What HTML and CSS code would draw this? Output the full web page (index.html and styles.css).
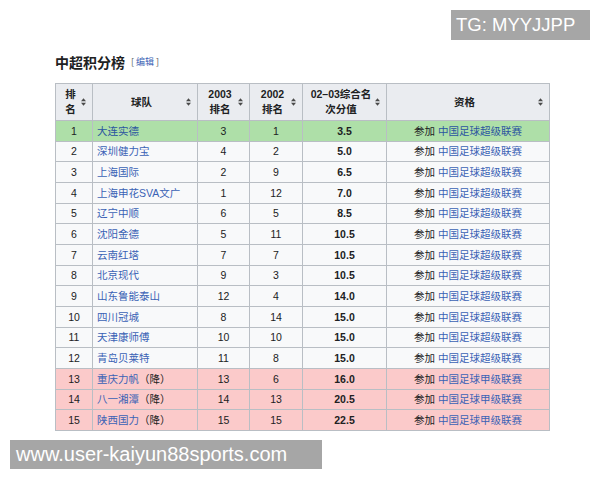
FILE: index.html
```html
<!DOCTYPE html>
<html lang="zh-CN">
<head>
<meta charset="utf-8">
<title>中超积分榜</title>
<link rel="stylesheet" href="styles.css">
</head>
<body>
<div class="page">
  <h2 class="title">中超积分榜<span class="edit">[ <a>编辑</a> ]</span></h2>
  <table class="wt">
    <colgroup>
      <col style="width:37px"><col style="width:105px"><col style="width:52px"><col style="width:53px"><col style="width:84px"><col style="width:163px">
    </colgroup>
    <thead>
      <tr>
        <th><div class="h"><span>排<br>名</span><svg viewBox="0 0 6 9"><path d="M3 0L6 3.6H0Z M3 9L0 5.4H6Z"/></svg></div></th>
        <th><div class="h"><span>球队</span><svg viewBox="0 0 6 9"><path d="M3 0L6 3.6H0Z M3 9L0 5.4H6Z"/></svg></div></th>
        <th><div class="h"><span>2003<br>排名</span><svg viewBox="0 0 6 9"><path d="M3 0L6 3.6H0Z M3 9L0 5.4H6Z"/></svg></div></th>
        <th><div class="h"><span>2002<br>排名</span><svg viewBox="0 0 6 9"><path d="M3 0L6 3.6H0Z M3 9L0 5.4H6Z"/></svg></div></th>
        <th><div class="h"><span>02–03综合名<br>次分值</span><svg viewBox="0 0 6 9"><path d="M3 0L6 3.6H0Z M3 9L0 5.4H6Z"/></svg></div></th>
        <th><div class="h"><span>资格</span><svg viewBox="0 0 6 9"><path d="M3 0L6 3.6H0Z M3 9L0 5.4H6Z"/></svg></div></th>
      </tr>
    </thead>
    <tbody>
      <tr class="up"><td>1</td><td class="team"><a>大连实德</a></td><td>3</td><td>1</td><td class="pts">3.5</td><td>参加 <a>中国足球超级联赛</a></td></tr>
      <tr><td>2</td><td class="team"><a>深圳健力宝</a></td><td>4</td><td>2</td><td class="pts">5.0</td><td>参加 <a>中国足球超级联赛</a></td></tr>
      <tr><td>3</td><td class="team"><a>上海国际</a></td><td>2</td><td>9</td><td class="pts">6.5</td><td>参加 <a>中国足球超级联赛</a></td></tr>
      <tr><td>4</td><td class="team"><a>上海申花SVA文广</a></td><td>1</td><td>12</td><td class="pts">7.0</td><td>参加 <a>中国足球超级联赛</a></td></tr>
      <tr><td>5</td><td class="team"><a>辽宁中顺</a></td><td>6</td><td>5</td><td class="pts">8.5</td><td>参加 <a>中国足球超级联赛</a></td></tr>
      <tr><td>6</td><td class="team"><a>沈阳金德</a></td><td>5</td><td>11</td><td class="pts">10.5</td><td>参加 <a>中国足球超级联赛</a></td></tr>
      <tr><td>7</td><td class="team"><a>云南红塔</a></td><td>7</td><td>7</td><td class="pts">10.5</td><td>参加 <a>中国足球超级联赛</a></td></tr>
      <tr><td>8</td><td class="team"><a>北京现代</a></td><td>9</td><td>3</td><td class="pts">10.5</td><td>参加 <a>中国足球超级联赛</a></td></tr>
      <tr><td>9</td><td class="team"><a>山东鲁能泰山</a></td><td>12</td><td>4</td><td class="pts">14.0</td><td>参加 <a>中国足球超级联赛</a></td></tr>
      <tr><td>10</td><td class="team"><a>四川冠城</a></td><td>8</td><td>14</td><td class="pts">15.0</td><td>参加 <a>中国足球超级联赛</a></td></tr>
      <tr><td>11</td><td class="team"><a>天津康师傅</a></td><td>10</td><td>10</td><td class="pts">15.0</td><td>参加 <a>中国足球超级联赛</a></td></tr>
      <tr><td>12</td><td class="team"><a>青岛贝莱特</a></td><td>11</td><td>8</td><td class="pts">15.0</td><td>参加 <a>中国足球超级联赛</a></td></tr>
      <tr class="down"><td>13</td><td class="team"><a>重庆力帆</a>（降）</td><td>13</td><td>6</td><td class="pts">16.0</td><td>参加 <a>中国足球甲级联赛</a></td></tr>
      <tr class="down"><td>14</td><td class="team"><a>八一湘潭</a>（降）</td><td>14</td><td>13</td><td class="pts">20.5</td><td>参加 <a>中国足球甲级联赛</a></td></tr>
      <tr class="down"><td>15</td><td class="team"><a>陕西国力</a>（降）</td><td>15</td><td>15</td><td class="pts">22.5</td><td>参加 <a>中国足球甲级联赛</a></td></tr>
    </tbody>
  </table>
</div>
<div class="wm wm-tg">TG: MYYJJPP</div>
<div class="wm wm-url">www.user-kaiyun88sports.com</div>
</body>
</html>
```

FILE: styles.css
```css
html, body {
  margin: 0;
  padding: 0;
  background: #ffffff;
}
body {
  width: 600px;
  height: 480px;
  position: relative;
  overflow: hidden;
  font-family: "Liberation Sans", "Noto Sans CJK SC", sans-serif;
  color: #202122;
}
.page {
  padding: 52px 0 0 55px;
}
.title {
  margin: 0 0 11px 0;
  font-size: 14px;
  line-height: 20px;
  font-weight: bold;
  font-family: "Noto Sans CJK SC", sans-serif;
  color: #202122;
  display: flex;
  align-items: center;
}
.edit {
  font-size: 9px;
  font-weight: normal;
  color: #54595d;
  margin-left: 6px;
}
.edit a {
  color: #3a62b5;
}
.wt {
  border-collapse: collapse;
  table-layout: fixed;
  width: 494px;
  font-size: 10.5px;
  background: #f8f9fa;
}
.wt th, .wt td {
  border: 1px solid #b9bec4;
  padding: 0;
}
.wt th {
  background: #eaecf0;
  height: 36px;
  font-weight: bold;
  font-family: "Liberation Sans", "Noto Sans CJK SC", sans-serif;
  line-height: 15px;
}
.h {
  display: flex;
  align-items: center;
  padding: 0 6px 0 4px;
}
.h span {
  flex: 1;
  text-align: center;
}
.h svg {
  width: 5px;
  height: 8px;
  fill: #4a4a4a;
  flex: none;
}
.wt td {
  height: 19.67px;
  text-align: center;
  line-height: 14px;
  font-family: "Liberation Sans", "Noto Sans CJK SC", sans-serif;
}
.wt td.team {
  text-align: left;
  padding-left: 4px;
}
.wt td.pts {
  font-weight: bold;
}
.wt a {
  color: #3a62b5;
}
.wt tr.up td {
  background: #aedfa8;
}
.wt tr.up a {
  color: #2b55a0;
}
.wt tr.down td {
  background: #fbcaca;
}
.wm {
  position: absolute;
  background: #a6a6a6;
  color: #ffffff;
  font-family: "Liberation Sans", sans-serif;
  box-sizing: border-box;
}
.wm-tg {
  left: 451px;
  top: 10px;
  width: 139px;
  height: 30px;
  font-size: 18.5px;
  line-height: 30px;
  padding-left: 5px;
}
.wm-url {
  left: 10px;
  top: 440px;
  width: 312px;
  height: 29px;
  font-size: 20px;
  line-height: 29px;
  padding-left: 6px;
}
```
